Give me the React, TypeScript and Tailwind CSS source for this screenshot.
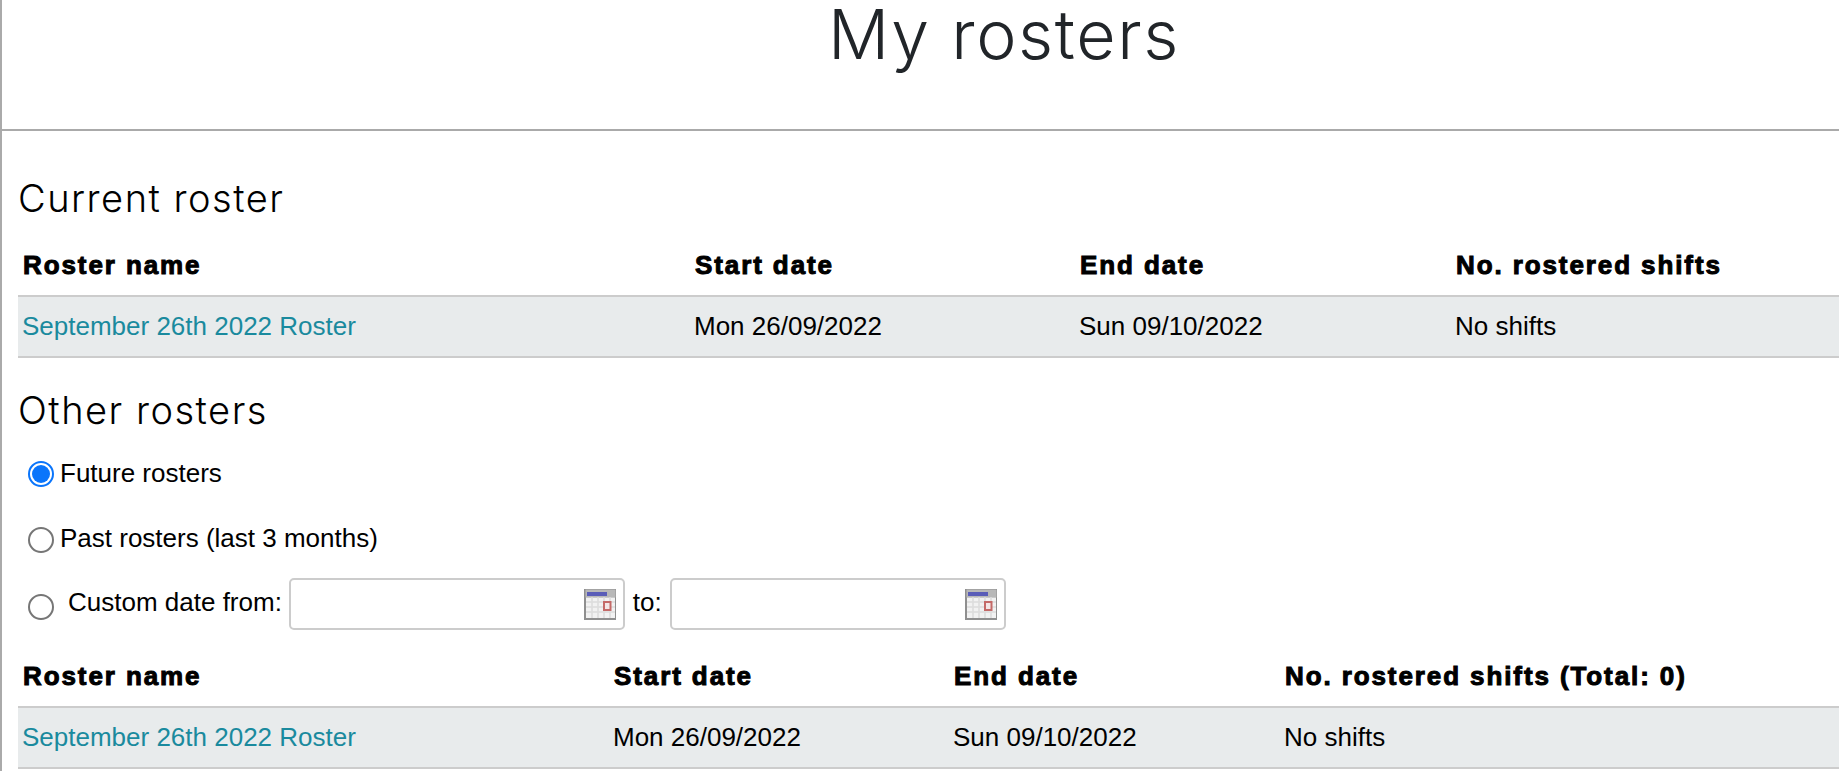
import React from 'react';

const CalendarIcon: React.FC = () => (
  <svg width="32" height="31" viewBox="0 0 32 31" className="shrink-0">
    <rect x="0" y="0" width="32" height="31" fill="#8f8f8f" />
    <rect x="1.5" y="0.5" width="30" height="8" fill="#b8b8b8" />
    <rect x="3" y="3" width="20" height="4" fill="#5a5db8" />
    <rect x="2" y="8.5" width="29" height="20.5" fill="#f2f2f2" />
    <path d="M8 8v21M14 8v21M20 8v21M26 8v21M2 13h29M2 18h29M2 23h29" stroke="#dcdcdc" strokeWidth="1.5" />
    <rect x="20" y="13" width="6.5" height="8" fill="#f3e6e6" stroke="#c46a68" strokeWidth="2" />
  </svg>
);

const RosterTable: React.FC<{ cols: string; lastHeader: string }> = ({ cols, lastHeader }) => (
  <div className="text-[26px] text-black">
    <div className={`grid ${cols} h-[60px] items-center px-[5px] font-bold tracking-[1.9px] [-webkit-text-stroke:1px_black]`}>
      <div>Roster name</div>
      <div>Start date</div>
      <div>End date</div>
      <div>{lastHeader}</div>
    </div>
    <div className={`grid ${cols} h-[63px] items-center px-[4px] bg-[#e8ebec] border-y-2 border-[#cccccc]`}>
      <a className="text-[#1a8a9e]">September 26th 2022 Roster</a>
      <div>Mon 26/09/2022</div>
      <div>Sun 09/10/2022</div>
      <div>No shifts</div>
    </div>
  </div>
);

const DateField: React.FC = () => (
  <div className="flex items-center justify-end w-[336px] h-[52px] pr-[7px] bg-white border-2 border-[#cccccc] rounded-[5px]">
    <CalendarIcon />
  </div>
);

const Radio: React.FC<{ checked?: boolean }> = ({ checked }) => (
  <span className={`flex items-center justify-center shrink-0 w-[26px] h-[26px] rounded-full bg-white border-2 ${checked ? 'border-[#0a75fb]' : 'border-[#767676]'}`}>
    {checked && <span className="block w-[18px] h-[18px] rounded-full bg-[#0a75fb]" />}
  </span>
);

export default function App() {
  return (
    <div className="h-[771px] overflow-hidden bg-white border-l-2 border-[#aaaaaa] font-['Liberation_Sans',Arial,sans-serif]">
      <header className="flex justify-center h-[131px] pl-[167px] border-b-2 border-[#aaaaaa]">
        <h1 className="font-['Inter',sans-serif] font-light text-[68px] leading-[68px] text-[#212529] tracking-[1.6px]">My rosters</h1>
      </header>

      <main className="pl-[16px]">
        <h2 className="mt-[44px] font-['Inter',sans-serif] font-light text-[38px] leading-[46px] text-black tracking-[1.5px]">Current roster</h2>
        <div className="mt-[14px]">
          <RosterTable cols="grid-cols-[672px_385px_376px_1fr]" lastHeader="No. rostered shifts" />
        </div>

        <h2 className="mt-[29px] font-['Inter',sans-serif] font-light text-[38px] leading-[46px] text-black tracking-[1.5px]">Other rosters</h2>

        <div className="pl-[10px] text-[26px] text-black">
          <label className="flex items-center gap-[6px] mt-[23px] h-[36px]">
            <Radio checked />
            <span className="-mt-[2px]">Future rosters</span>
          </label>
          <label className="flex items-center gap-[6px] mt-[35px] h-[26px]">
            <Radio />
            <span className="-mt-[4px]">Past rosters (last 3 months)</span>
          </label>
          <div className="flex items-center mt-[25px]">
            <span className="mt-[6px]">
              <Radio />
            </span>
            <span className="ml-[14px] mr-[7px] -mt-[4px]">Custom date from:</span>
            <DateField />
            <span className="ml-[8px] mr-[8px] -mt-[4px]">to:</span>
            <DateField />
          </div>
        </div>

        <div className="mt-[16px]">
          <RosterTable cols="grid-cols-[591px_340px_331px_1fr]" lastHeader="No. rostered shifts (Total: 0)" />
        </div>
      </main>
    </div>
  );
}
